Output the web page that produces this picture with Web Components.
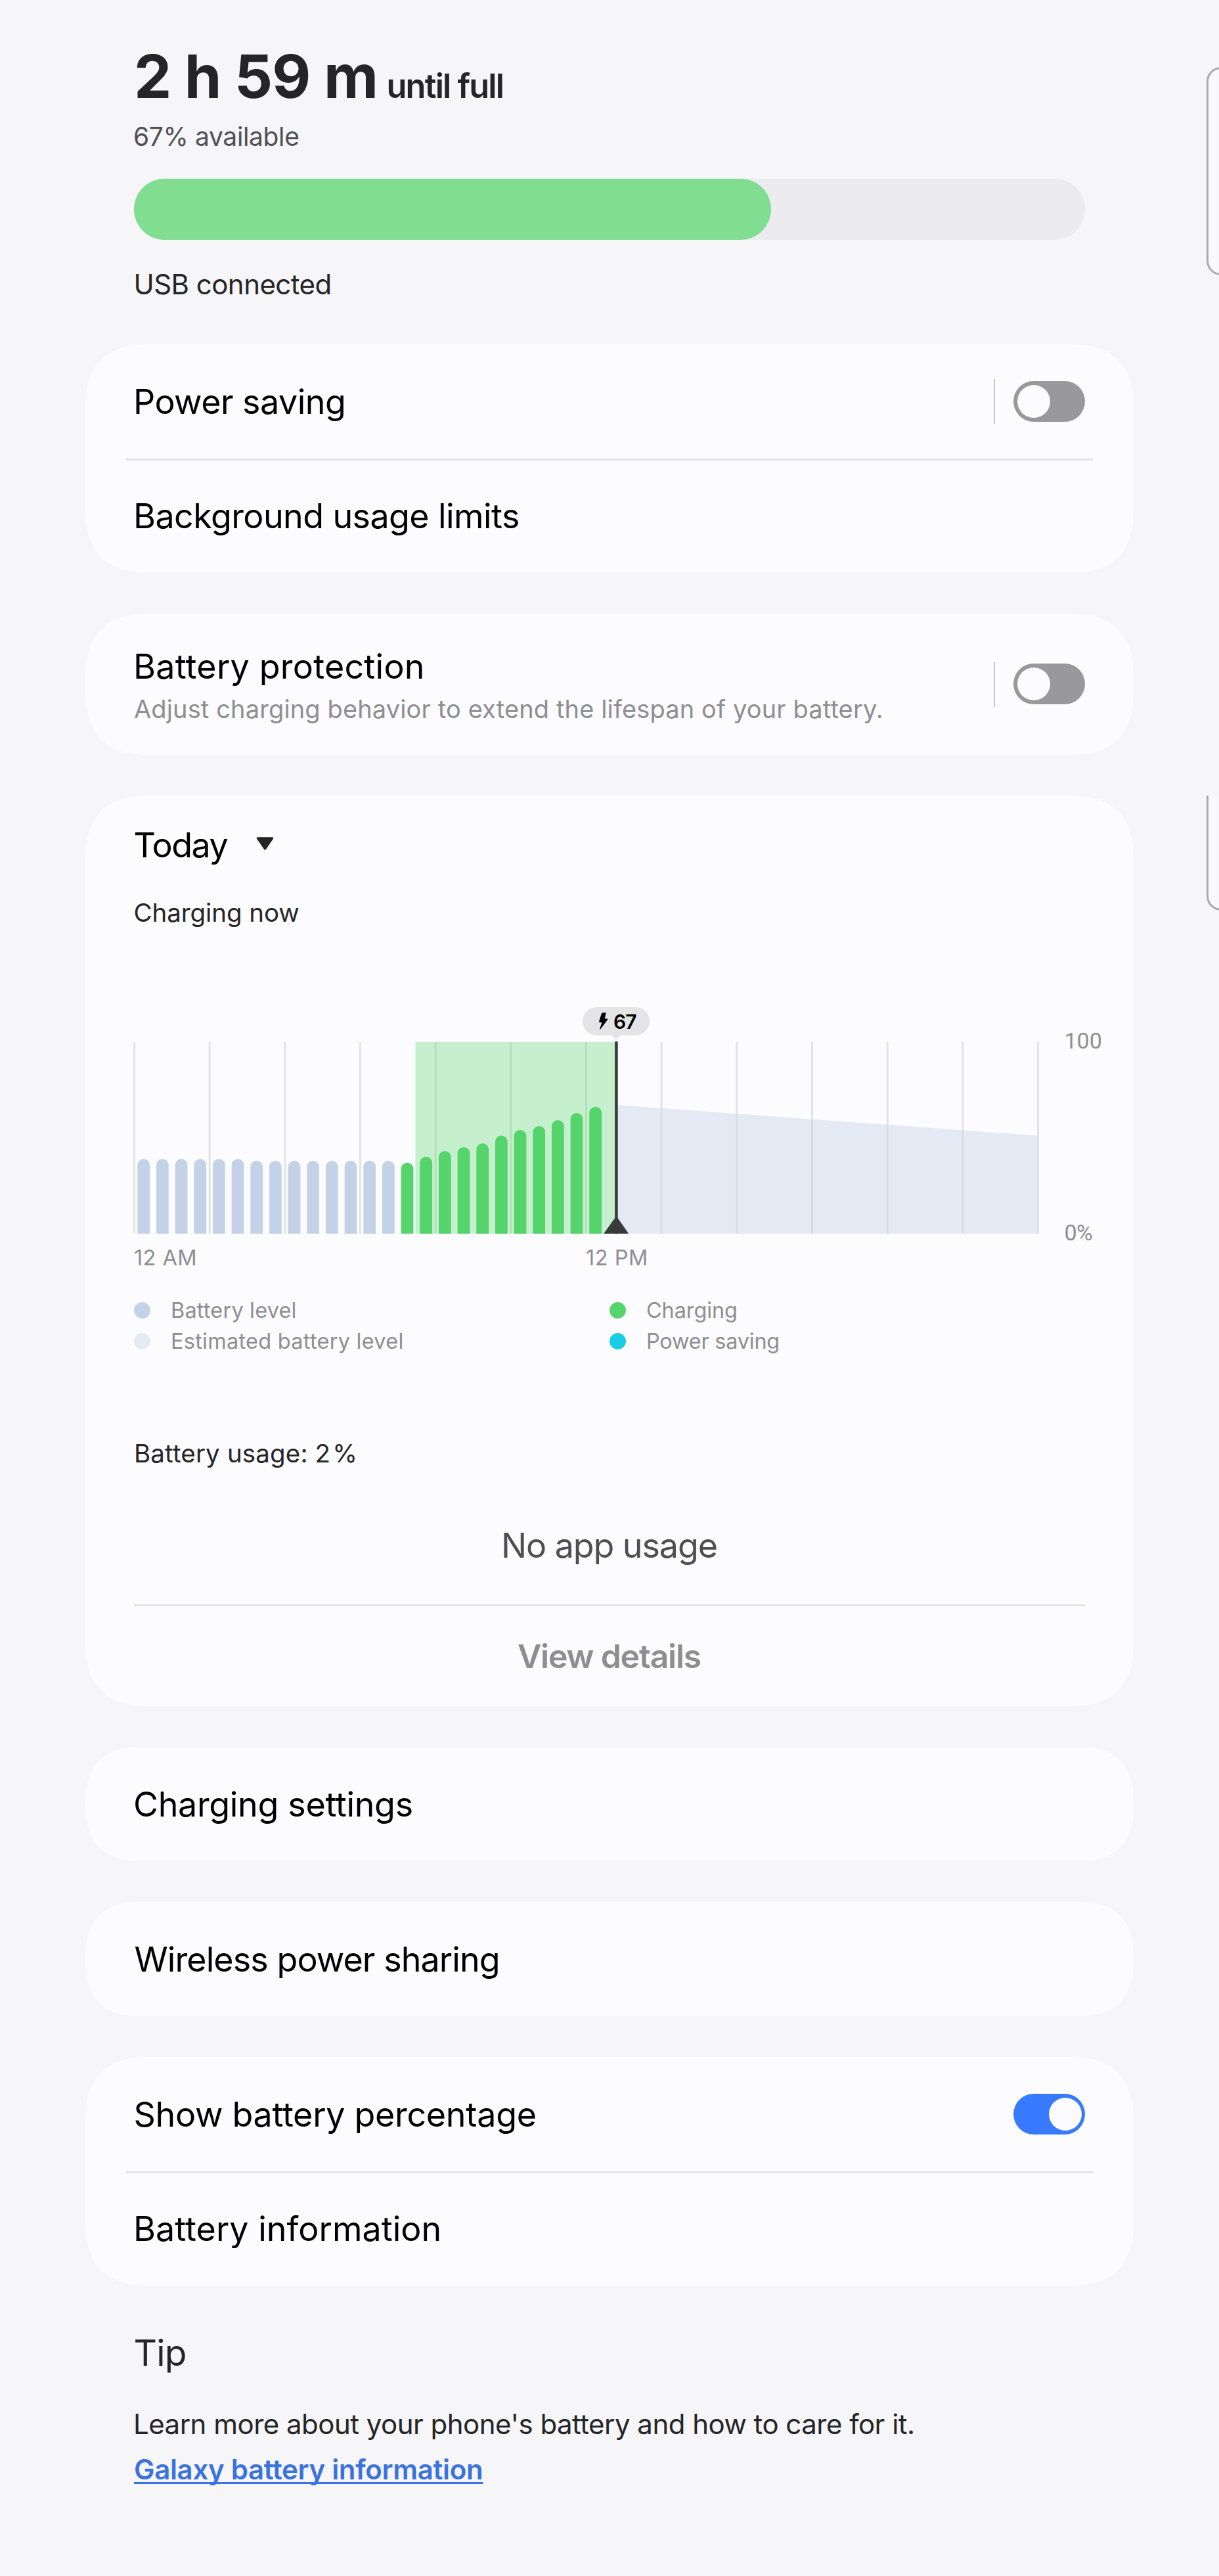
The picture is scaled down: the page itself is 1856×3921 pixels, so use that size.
<!DOCTYPE html>
<html lang="en">
<head>
<meta charset="utf-8">
<title>Battery</title>
<style>
  body { margin: 0; background: #f6f6f8; font-family: Inter, "Liberation Sans", sans-serif; color: #000; }
</style>
</head>
<body>
<battery-page></battery-page>

<script>
const define = (name, html, setup) => {
  const template = document.createElement('template');
  template.innerHTML = html;
  customElements.define(name, class extends HTMLElement {
    constructor() {
      super();
      this.attachShadow({ mode: 'open' }).append(template.content.cloneNode(true));
    }
    connectedCallback() { if (setup) setup(this, this.shadowRoot); }
  });
};

/* One line of text; size, tracking, line height and nudge come from custom properties. */
define('ui-text', `
  <style>
    :host { display: block; white-space: nowrap; font-size: var(--s, 52px); line-height: var(--lh, 66px);
      letter-spacing: var(--ls, 0px); font-weight: var(--w, 400); color: var(--c, #000); margin-left: var(--dx, 0px); }
  </style><slot></slot>`);

define('ui-toggle', `
  <style>
    :host { display: flex; box-sizing: border-box; width: 109px; height: 62px; padding: 6px; border-radius: 31px;
      background: #99989d; flex: none; }
    :host([on]) { justify-content: flex-end; background: #387aff; padding-right: 5px; }
    i { width: 50px; height: 50px; border-radius: 50%; background: #fcfcfe; }
  </style><i></i>`);

define('ui-card', `
  <style>
    :host { display: flex; flex-direction: column; width: 1596px; background: #fcfcfe; border-radius: 81px; }
    @supports (corner-shape: superellipse(1.35)) {
      :host { border-radius: 100px; corner-shape: superellipse(1.35); }
    }
  </style><slot></slot>`);

/* The row overlaps its own rule, so the rule takes no height of its own. */
define('ui-row', `
  <style>
    :host { display: block; }
    .rule { height: 3px; margin: 0 62px; }
    :host([ruled]) .rule { background: #e3e3e5; }
    .row { display: flex; align-items: center; height: var(--h, 174px); margin: -3px 74px 0 73px; }
    .label { flex: 1; padding-top: 2px; }
    .sep { display: none; width: 2px; height: 68px; margin-right: 28px; background: #c6c6c8; }
    :host([split]) .sep { display: block; }
  </style>
  <div class="rule"></div>
  <div class="row"><div class="label"><slot></slot></div><div class="sep"></div><slot name="end"></slot></div>`);

define('charge-bar', `
  <style>
    :host { display: flex; width: 1448px; height: 93px; border-radius: 46.5px; background: #ececee; }
    i { width: 67%; border-radius: 46.5px; background: #81dd92; }
  </style><i></i>`);

define('legend-item', `
  <style>
    :host { display: flex; align-items: center; gap: 31px; height: 47px; --s: 32.5px; --lh: 47px; --c: #8e8e92; }
    i { width: 25px; height: 25px; border-radius: 50%; background: var(--dot); }
  </style><i></i><slot></slot>`);

define('battery-chart', `
  <style>
    :host { display: block; height: 420px; }
    svg { display: block; }
    text { font-size: 32.5px; fill: #8e8e92; }
    .axis { font-family: Roboto, sans-serif; font-size: 34px; }
  </style>
  <svg width="1596" height="420" viewBox="130 1520 1596 420">
    <g id="grid" fill="#e3e3e5"></g>
    <rect x="632.5" y="1586" width="306" height="291.7" fill="#54d46b" fill-opacity=".33"/>
    <path d="M938.4 1681.8 1580.5 1728.7V1877.7H938.4Z" fill="#c4d2e8" fill-opacity=".43"/>
    <g id="bars"></g>
    <rect x="936.1" y="1585" width="4.6" height="292.7" rx="2" fill="#3a3a3c"/>
    <path d="M938.4 1851 957.2 1877.7H919.2Z" fill="#3a3a3c"/>
    <rect x="887" y="1533" width="102" height="43" rx="21.5" fill="#e4e4e6"/>
    <path d="M931 1575.5H945L939.6 1581.3Q938 1583 936.4 1581.3Z" fill="#e4e4e6"/>
    <path d="M917.6 1541.6H922.8L920.7 1550.4H924.3Q925.8 1550.8 925 1552.2L914.5 1566.2Q913 1567 913.4 1565.4L916.4 1556.2H912.8Q911.8 1555.8 912.1 1554.6L915.6 1543.4Q916.2 1541.8 917.6 1541.6Z" fill="#000"/>
    <text x="934" y="1566" style="font-size:30px;font-weight:600;fill:#000;letter-spacing:-.9px">67</text>
    <text x="204" y="1926" style="letter-spacing:.4px">12 AM</text>
    <text x="892" y="1926" style="letter-spacing:.5px">12 PM</text>
    <text class="axis" x="1620.5" y="1596">100</text>
    <text class="axis" x="1620.5" y="1888" style="letter-spacing:-.5px">0%</text>
  </svg>`, (host, root) => {
  const ns = 'http://www.w3.org/2000/svg';
  const add = (parent, tag, attrs) => {
    const el = document.createElementNS(ns, tag);
    for (const k in attrs) el.setAttribute(k, attrs[k]);
    root.getElementById(parent).append(el);
  };
  const base = 1877.7;
  for (let i = 0; i <= 12; i++)
    add('grid', 'rect', { x: 203 + i * 114.667, y: 1586, width: 3, height: base - 1586 });
  const tops = [1764, 1764, 1764, 1764, 1764, 1764, 1766.7, 1766.7, 1766.7, 1766.7, 1766.7, 1766.7, 1766.7, 1766.7,
    1769.7, 1760.7, 1752, 1746, 1740.3, 1728.5, 1720, 1714, 1705, 1694, 1684.8];
  tops.forEach((y, i) => {
    const x = 209.3 + i * 28.667;
    add('bars', 'path', {
      d: `M${x} ${base}V${y + 9.4}a9.4 9.4 0 0 1 18.8 0V${base}Z`,
      fill: i < 14 ? '#c4d2e8' : '#54d46b'
    });
  });
});

/* Edge handles that are cut off by the right side of the screen. */
define('edge-handle', `
  <style>
    :host { position: absolute; right: 0; width: 19px; overflow: hidden; }
    i { display: block; box-sizing: border-box; width: 60px; height: 100%; border: 3px solid #a9a9ab;
      border-radius: 22px; background: #f9f9fb; }
    :host([cut]) i { border-top: 0; border-radius: 0 0 22px 22px; }
  </style><i></i>`);

define('battery-page', `
  <style>
    :host { display: block; position: relative; box-sizing: border-box; width: 1856px; height: 3921px; overflow: hidden; padding: 61px 130px 0; }
    header { padding: 0 74px; height: 463px; box-sizing: border-box; }
    .head { display: flex; align-items: baseline; }
    .head ui-text:first-child { width: 384.5px; }
    .cards { display: flex; flex-direction: column; gap: 62px; }
    .today { display: flex; align-items: center; height: 66px; margin: 43px 0 0 73.5px; }
    .today svg { margin: -6px 0 0 43.5px; }
    .legend { display: grid; grid-template-columns: 724px 1fr; margin: 31.5px 74px 0; }
    .center { display: flex; justify-content: center; align-items: center; }
    hr { border: 0; height: 3px; margin: 56px 74px 0; background: #e3e3e5; width: 1448px; }
    footer { padding: 67px 73px 0; }
    a { color: inherit; text-decoration: underline; text-decoration-thickness: 3px; text-underline-offset: 4px; text-decoration-skip-ink: none; }
  </style>

  <header>
    <div class="head">
      <ui-text style="--s:91px;--lh:110px;--w:700;--ls:-1px;--c:#252527">2 h 59 m</ui-text>
      <ui-text style="--s:50.5px;--lh:66px;--w:600;--ls:-1.82px;--c:#252527">until full</ui-text>
    </div>
    <ui-text style="--s:39px;--lh:50px;--ls:-.37px;--c:#505052;--dx:-1px;padding-top:12px">67% available</ui-text>
    <charge-bar style="margin-top:39px"></charge-bar>
    <ui-text style="--s:42px;--lh:54px;--ls:-.55px;--c:#252527;--dx:-.5px;padding-top:41px">USB connected</ui-text>
  </header>

  <div class="cards">
    <ui-card style="height:348px">
      <ui-row split style="padding-top:3px;margin-top:-3px;--h:174px"><ui-text style="--ls:-.53px">Power saving</ui-text><ui-toggle slot="end"></ui-toggle></ui-row>
      <ui-row ruled><ui-text style="--ls:-.6px">Background usage limits</ui-text></ui-row>
    </ui-card>

    <ui-card>
      <ui-row split style="--h:215px">
        <ui-text style="--ls:.22px;--lh:66px">Battery protection</ui-text>
        <ui-text style="--s:38px;--lh:62px;--ls:.13px;--c:#8e8e92;--dx:1px;margin-bottom:-6px">Adjust charging behavior to extend the lifespan of your battery.</ui-text>
        <ui-toggle slot="end" style="margin-top:-1px"></ui-toggle>
      </ui-row>
    </ui-card>

    <ui-card style="height:1386px">
      <div class="today">
        <ui-text style="--ls:-1.5px">Today</ui-text>
        <svg width="27" height="20" viewBox="0 0 27 20"><path d="M2.2 1.8H24.8L13.5 18.2Z" fill="#252527" stroke="#252527" stroke-width="3" stroke-linejoin="round"/></svg>
      </div>
      <ui-text style="--s:38.5px;--lh:50px;--ls:-.08px;--c:#252527;--dx:73.5px;margin-top:43.6px">Charging now</ui-text>
      <battery-chart style="margin-top:106.4px"></battery-chart>
      <div class="legend">
        <legend-item style="--dot:#c4d2e8"><ui-text style="--ls:.17px">Battery level</ui-text></legend-item>
        <legend-item style="--dot:#54d46b"><ui-text style="--ls:-.12px">Charging</ui-text></legend-item>
        <legend-item style="--dot:#e4ebf5"><ui-text style="--ls:.26px">Estimated battery level</ui-text></legend-item>
        <legend-item style="--dot:#19cde6"><ui-text style="--ls:-.25px">Power saving</ui-text></legend-item>
      </div>
      <ui-text style="--s:38.5px;--lh:50px;--ls:.15px;--c:#252527;--dx:74px;margin-top:121.5px">Battery usage: 2<span style="margin-left:3px">%</span></ui-text>
      <div class="center" style="margin-top:83px"><ui-text style="--ls:-1.1px;--dx:-1px;--c:#4f4f51">No app usage</ui-text></div>
      <hr>
      <div class="center" style="height:152px"><ui-text style="--s:50px;--w:600;--ls:-1.22px;--dx:-1px;--c:#8e8e92">View details</ui-text></div>
    </ui-card>

    <ui-card><ui-row><ui-text style="--ls:-.34px">Charging settings</ui-text></ui-row></ui-card>
    <ui-card><ui-row><ui-text style="--ls:-.92px;--dx:1.5px">Wireless power sharing</ui-text></ui-row></ui-card>

    <ui-card>
      <ui-row><ui-text style="--ls:-.3px;--dx:.5px">Show battery percentage</ui-text><ui-toggle slot="end" on style="margin-top:-1px"></ui-toggle></ui-row>
      <ui-row ruled><ui-text style="--ls:.02px">Battery information</ui-text></ui-row>
    </ui-card>
  </div>

  <footer>
    <ui-text style="--s:55px;--lh:70px;--ls:-.8px;--c:#252527;--dx:.5px">Tip</ui-text>
    <ui-text style="--s:42px;--lh:56px;--ls:-.52px;--c:#252527;padding-top:45.5px">Learn more about your phone's battery and how to care for it.</ui-text>
    <ui-text style="--s:42px;--lh:56px;--w:600;--ls:-.32px;--c:#3a72e0;--dx:1px;padding-top:13.5px"><a>Galaxy battery information</a></ui-text>
  </footer>

  <edge-handle style="top:102px;height:317px"></edge-handle>
  <edge-handle cut style="top:1211px;height:175px"></edge-handle>`);
</script>
</body>
</html>
